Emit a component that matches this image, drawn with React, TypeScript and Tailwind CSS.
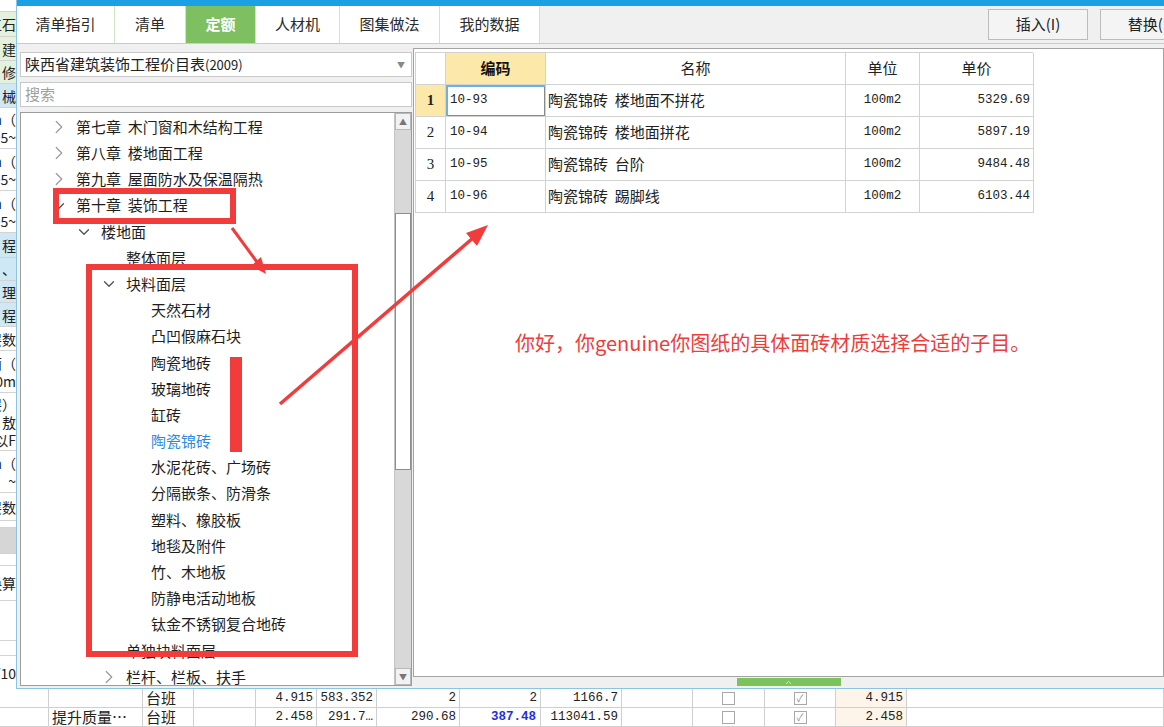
import { ChevronRight, ChevronDown } from 'lucide-react';

type Node = { lvl: 1 | 2 | 3 | 4; label: string; icon?: 'right' | 'down'; selected?: boolean };

const tree: Node[] = [
  { lvl: 1, label: '第七章  木门窗和木结构工程', icon: 'right' },
  { lvl: 1, label: '第八章  楼地面工程', icon: 'right' },
  { lvl: 1, label: '第九章  屋面防水及保温隔热', icon: 'right' },
  { lvl: 1, label: '第十章  装饰工程', icon: 'down' },
  { lvl: 2, label: '楼地面', icon: 'down' },
  { lvl: 3, label: '整体面层' },
  { lvl: 3, label: '块料面层', icon: 'down' },
  { lvl: 4, label: '天然石材' },
  { lvl: 4, label: '凸凹假麻石块' },
  { lvl: 4, label: '陶瓷地砖' },
  { lvl: 4, label: '玻璃地砖' },
  { lvl: 4, label: '缸砖' },
  { lvl: 4, label: '陶瓷锦砖', selected: true },
  { lvl: 4, label: '水泥花砖、广场砖' },
  { lvl: 4, label: '分隔嵌条、防滑条' },
  { lvl: 4, label: '塑料、橡胶板' },
  { lvl: 4, label: '地毯及附件' },
  { lvl: 4, label: '竹、木地板' },
  { lvl: 4, label: '防静电活动地板' },
  { lvl: 4, label: '钛金不锈钢复合地砖' },
  { lvl: 3, label: '单独块料面层' },
  { lvl: 3, label: '栏杆、栏板、扶手', icon: 'right' },
];

const indent = { 1: 'pl-[37px]', 2: 'pl-[62px]', 3: 'pl-[87px]', 4: 'pl-[112px]' };

const tabs = [
  { label: '清单指引', w: 'w-[98px]' },
  { label: '清单', w: 'w-[71px]' },
  { label: '定额', w: 'w-[70px]', active: true },
  { label: '人材机', w: 'w-[84px]' },
  { label: '图集做法', w: 'w-[100px]' },
  { label: '我的数据', w: 'w-[100px]' },
];

const rows = [
  { no: '1', code: '10-93', name: '陶瓷锦砖  楼地面不拼花', unit: '100m2', price: '5329.69' },
  { no: '2', code: '10-94', name: '陶瓷锦砖  楼地面拼花', unit: '100m2', price: '5897.19' },
  { no: '3', code: '10-95', name: '陶瓷锦砖  台阶', unit: '100m2', price: '9484.48' },
  { no: '4', code: '10-96', name: '陶瓷锦砖  踢脚线', unit: '100m2', price: '6103.44' },
];

// what shows of the table behind the dialog, left edge
const strip: { h: string; bg?: string; lines: string[] }[] = [
  { h: 'h-[12px]', lines: [] },
  { h: 'h-[25px]', bg: 'bg-[#e4f1dc]', lines: ['工石'] },
  { h: 'h-[24px]', bg: 'bg-[#e4f1dc]', lines: ['建'] },
  { h: 'h-[23px]', bg: 'bg-[#e4f1dc]', lines: ['修'] },
  { h: 'h-[24px]', bg: 'bg-[#cfe8f6]', lines: ['械'] },
  { h: 'h-[41px]', lines: ['0m（', '95~'] },
  { h: 'h-[42px]', lines: ['0m（', '95~'] },
  { h: 'h-[42px]', lines: ['0m（', '95~'] },
  { h: 'h-[25px]', bg: 'bg-[#cfe8f6]', lines: ['程'] },
  { h: 'h-[23px]', bg: 'bg-[#cfe8f6]', lines: ['、'] },
  { h: 'h-[22px]', bg: 'bg-[#cfe8f6]', lines: ['理'] },
  { h: 'h-[24px]', bg: 'bg-[#cfe8f6]', lines: ['程'] },
  { h: 'h-[24px]', lines: ['层数'] },
  { h: 'h-[42px]', lines: ['面（', '00m'] },
  { h: 'h-[58px]', lines: ['层）', '，敖', '以F'] },
  { h: 'h-[42px]', lines: ['0m（', '~'] },
  { h: 'h-[28px]', lines: ['层数'] },
  { h: 'h-[7px]', lines: [] },
  { h: 'h-[26px]', bg: 'bg-[#d6d6d6]', lines: [] },
  { h: 'h-[12px]', lines: [] },
  { h: 'h-[35px]', lines: ['换算'] },
  { h: 'h-[40px]', lines: [] },
  { h: 'h-[15px]', lines: [] },
  { h: 'h-[35px]', lines: ['/10'] },
];

const cols = [
  'w-[49px]', 'w-[94px]', 'w-[51px]', 'w-[62px]', 'w-[61px]', 'w-[60px]', 'w-[83px]',
  'w-[81px]', 'w-[81px]', 'w-[71px]', 'w-[72px]', 'w-[71px]', 'w-[71px]', 'flex-1',
];

type Cell = string | { cb: boolean } | { blue: string };

const under: Cell[][] = [
  ['', '', '台班', '', '4.915', '583.352', '2', '2', '1166.7', '', { cb: false }, { cb: true }, '4.915', ''],
  ['', '提升质量…', '台班', '', '2.458', '291.7…', '290.68', { blue: '387.48' }, '113041.59', '', { cb: false }, { cb: true }, '2.458', ''],
];

function TreeRow({ n }: { n: Node }) {
  return (
    <div className={`h-[26.2px] shrink-0 flex items-center whitespace-pre ${indent[n.lvl]}`}>
      <span className="w-[18px] flex items-center">
        {n.icon === 'right' && <ChevronRight size={22} strokeWidth={1.3} className="shrink-0 -ml-[10px] text-[#9a9a9a]" />}
        {n.icon === 'down' && <ChevronDown size={18} strokeWidth={1.8} className="shrink-0 -ml-[8px] text-[#555]" />}
      </span>
      <span className={n.selected ? 'text-[#2b8be0]' : 'text-[#1e1e1e]'}>{n.label}</span>
    </div>
  );
}

function UnderCell({ c, i }: { c: Cell; i: number }) {
  const base = `${cols[i]} shrink-0 h-full border-r border-[#cfcfcf] flex items-center`;
  const tint = i === 12 ? 'bg-[#fdf4ea]' : '';
  if (typeof c === 'object' && 'cb' in c) {
    return (
      <div className={`${base} justify-center`}>
        <span className="w-[13px] h-[13px] border border-[#a8a8a8] bg-white flex items-center justify-center text-[10px] leading-none text-[#8a8a8a]">
          {c.cb ? '✓' : ''}
        </span>
      </div>
    );
  }
  if (typeof c === 'object') {
    return (
      <div className={`${base} justify-end pr-[4px] font-['Liberation_Mono',monospace] text-[12.5px] font-bold text-[#1f2fe0]`}>
        {c.blue}
      </div>
    );
  }
  const isNum = /^[\d.…]+$/.test(c);
  return (
    <div
      className={`${base} ${tint} overflow-hidden whitespace-nowrap ${
        isNum ? "justify-end pr-[3px] font-['Liberation_Mono',monospace] text-[12.5px]" : 'pl-[3px]'
      }`}
    >
      {c}
    </div>
  );
}

export default function App() {
  return (
    <div className="relative w-[1164px] h-[727px] overflow-hidden bg-white font-['Noto_Sans_CJK_SC','Noto_Sans',sans-serif] text-[15px] text-[#222]">
      <div className="flex h-[689px]">
        {/* background app column */}
        <div className="w-[16px] shrink-0 flex flex-col overflow-hidden">
          {strip.map((r, i) => (
            <div key={i} className={`${r.h} shrink-0 ${r.bg ?? 'bg-white'} border-b border-[#d3d3d3] flex flex-col justify-center items-end overflow-hidden`}>
              {r.lines.map((l, j) => (
                <span key={j} className="whitespace-nowrap leading-[18px] text-[14px] text-[#222]">{l}</span>
              ))}
            </div>
          ))}
        </div>

        {/* dialog */}
        <div className="flex-1 flex flex-col border-l border-b border-[#8cc4e4] bg-[#f0f0f0] min-w-0">
          <div className="h-[6px] shrink-0 bg-[#1ca0e4]" />
          <div className="h-[38px] shrink-0 flex border-b border-[#b7dba6]">
            {tabs.map((t) => (
              <div
                key={t.label}
                className={`${t.w} shrink-0 flex items-center justify-center border-r border-[#cfe6c3] ${
                  t.active ? 'bg-[#7dbf61] text-white font-bold' : 'bg-white text-[#2a2a2a]'
                }`}
              >
                {t.label}
              </div>
            ))}
            <div className="flex-1 flex items-start gap-[12px] pl-[448px] pt-[3px] overflow-hidden">
              {['插入(I)', '替换(I)'].map((b) => (
                <div key={b} className="w-[100px] h-[31px] shrink-0 border border-[#bcbcbc] bg-[#f4f4f4] flex items-center justify-center text-[#222]">
                  {b}
                </div>
              ))}
            </div>
          </div>

          <div className="flex-1 min-h-0 flex overflow-hidden">
            {/* left: library + tree */}
            <div className="w-[392px] ml-[3px] pt-[8px] pb-[2px] flex flex-col gap-[5px] min-h-0">
              <div className="h-[25px] shrink-0 bg-white border border-[#c9c9c9] flex items-center pl-[4px] pr-[6px]">
                <span className="flex-1">陕西省建筑装饰工程价目表<span className="text-[13px]">(2009)</span></span>
                <span className="text-[8px] text-[#888]">▼</span>
              </div>
              <div className="h-[25px] shrink-0 bg-white border border-[#c9c9c9] flex items-center pl-[4px] text-[#a0a0a0]">搜索</div>
              <div className="flex-1 min-h-0 bg-white border border-[#9c9c9c] flex overflow-hidden">
                <div className="flex-1 pt-[1px] flex flex-col overflow-hidden">
                  {tree.map((n) => (
                    <TreeRow key={n.label} n={n} />
                  ))}
                </div>
                <div className="w-[17px] flex flex-col bg-[#d8d8d8] border-l border-[#c4c4c4]">
                  <div className="h-[17px] shrink-0 bg-[#f2f2f2] border border-[#b8b8b8] flex items-center justify-center text-[8px] text-[#777]">▲</div>
                  <div className="h-[83px] shrink-0" />
                  <div className="h-[257px] shrink-0 bg-white border border-[#8e8e8e]" />
                  <div className="flex-1" />
                  <div className="h-[17px] shrink-0 bg-[#f2f2f2] border border-[#b8b8b8] flex items-center justify-center text-[8px] text-[#777]">▼</div>
                </div>
              </div>
            </div>

            {/* right: quota table */}
            <div className="flex-1 ml-[1px] pt-[4px] flex flex-col min-h-0">
              <div className="flex-1 bg-white border border-[#a3a3a3]">
                <div className="ml-[1px] mt-[3px] w-[618px] grid grid-cols-[30px_100px_300px_74px_114px] border-t border-l border-[#d2d2d2]">
                  <div className="h-[32px] border-r border-b border-[#d2d2d2]" />
                  <div className="h-[32px] border-r border-b border-[#d2d2d2] bg-[#fce8a8] flex items-center justify-center font-bold text-[#111]">编码</div>
                  <div className="h-[32px] border-r border-b border-[#d2d2d2] flex items-center justify-center">名称</div>
                  <div className="h-[32px] border-r border-b border-[#d2d2d2] flex items-center justify-center">单位</div>
                  <div className="h-[32px] border-r border-b border-[#d2d2d2] flex items-center justify-center">单价</div>
                  {rows.map((r, i) => (
                    <div key={r.code} className="contents">
                      <div
                        className={`h-[32px] border-r border-b border-[#d2d2d2] flex items-center justify-center font-['Liberation_Serif',serif] ${
                          i === 0 ? 'bg-[#fce8a8] font-bold' : ''
                        }`}
                      >
                        {r.no}
                      </div>
                      <div
                        className={`h-[32px] border-r border-b border-[#d2d2d2] flex items-center pl-[4px] font-['Liberation_Mono',monospace] text-[12.5px] ${
                          i === 0 ? 'shadow-[inset_1px_1px_0_1px_#6fb0e0,inset_-1px_-1px_0_0_#8a8a8a]' : ''
                        }`}
                      >
                        {r.code}
                      </div>
                      <div className="h-[32px] border-r border-b border-[#d2d2d2] flex items-center pl-[2px] whitespace-pre">{r.name}</div>
                      <div className="h-[32px] border-r border-b border-[#d2d2d2] flex items-center justify-center font-['Liberation_Mono',monospace] text-[12.5px]">{r.unit}</div>
                      <div className="h-[32px] border-r border-b border-[#d2d2d2] flex items-center justify-end pr-[3px] font-['Liberation_Mono',monospace] text-[12.5px]">{r.price}</div>
                    </div>
                  ))}
                </div>
              </div>
              <div className="h-[11px] shrink-0 flex justify-center items-start pt-[1px]">
                <div className="w-[104px] h-[8px] bg-[#7cc25d] flex items-center justify-center">
                  <ChevronDown size={9} strokeWidth={2.5} className="rotate-180 text-[#d8f0cc]" />
                </div>
              </div>
            </div>
          </div>
        </div>
      </div>

      {/* rows of the background table below the dialog */}
      <div className="flex flex-col">
        {under.map((r, ri) => (
          <div key={ri} className="h-[19px] flex border-b border-[#cfcfcf]">
            {r.map((c, i) => (
              <UnderCell key={i} c={c} i={i} />
            ))}
          </div>
        ))}
      </div>

      {/* red annotations drawn over the screenshot */}
      <div className="absolute inset-0 pointer-events-none">
        <div className="absolute left-[53px] top-[188px] w-[183px] h-[36px] border-[6px] border-[#f23c3c]" />
        <div className="absolute left-[86px] top-[264px] w-[272px] h-[393px] border-[6px] border-[#f23c3c]" />
        <div className="absolute left-[230px] top-[357px] w-[12px] h-[95px] bg-[#f23c3c]" />
        <svg className="absolute inset-0" width="1164" height="727">
          <line x1="232" y1="228" x2="257" y2="262" stroke="#f23c3c" strokeWidth="3" />
          <polygon points="266,274 251,266 261,257" fill="#f23c3c" />
          <line x1="280" y1="404" x2="473" y2="238" stroke="#f23c3c" strokeWidth="3.5" />
          <polygon points="488,225 477,246 466,233" fill="#f23c3c" />
        </svg>
        <div className="absolute left-[515px] top-[328px] text-[20px] text-[#ee3c3c] whitespace-nowrap">
          你好，你genuine你图纸的具体面砖材质选择合适的子目。
        </div>
      </div>
    </div>
  );
}
